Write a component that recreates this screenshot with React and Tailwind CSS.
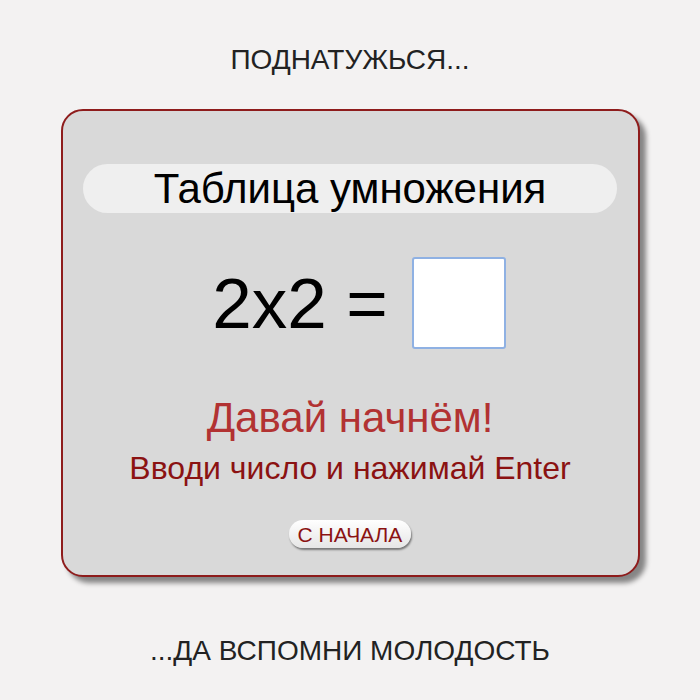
import React from 'react';

const App = () => {
  return (
    <div className="w-[700px] h-[700px] bg-[#f3f2f2] flex flex-col items-center font-['Liberation_Sans',Arial,sans-serif]">
      {/* Top caption */}
      <div className="mt-[44px] h-[32px] text-[28px] leading-[32px] text-[#222]">ПОДНАТУЖЬСЯ...</div>

      {/* Card */}
      <div className="mt-[33px] w-[579px] h-[468px] rounded-[22px] border-2 border-[#8e1c1c] bg-[#d9d9d9] shadow-[6px_6px_5px_rgba(0,0,0,0.45)] flex flex-col items-center pt-[53px]">
        <div className="w-[534px] h-[49px] rounded-full bg-[#efefef] flex items-center justify-center text-[42px] leading-none text-black">
          Таблица умножения
        </div>

        <div className="mt-[44px] pl-[18px] flex items-center">
          <span className="text-[71px] leading-none text-black">2x2 =</span>
          <input
            type="text"
            className="ml-[24px] w-[94px] h-[92px] bg-white border-2 border-[#8fb1e3] rounded-[3px] outline-none"
          />
        </div>

        <div className="mt-[45px] text-[42px] leading-[48px] text-[#b23232]">Давай начнём!</div>
        <div className="mt-[8px] text-[32px] leading-[36px] text-[#8b1212]">Вводи число и нажимай Enter</div>

        <button className="mt-[34px] h-[28px] px-[9px] rounded-full bg-gradient-to-b from-white to-[#e6e6e6] text-[21px] leading-none text-[#8b1212] shadow-[1px_2px_2px_rgba(0,0,0,0.45)]">
          С НАЧАЛА
        </button>
      </div>

      {/* Bottom caption */}
      <div className="mt-[58px] h-[32px] text-[28px] leading-[32px] text-[#222]">...ДА ВСПОМНИ МОЛОДОСТЬ</div>
    </div>
  );
};

export default App;
